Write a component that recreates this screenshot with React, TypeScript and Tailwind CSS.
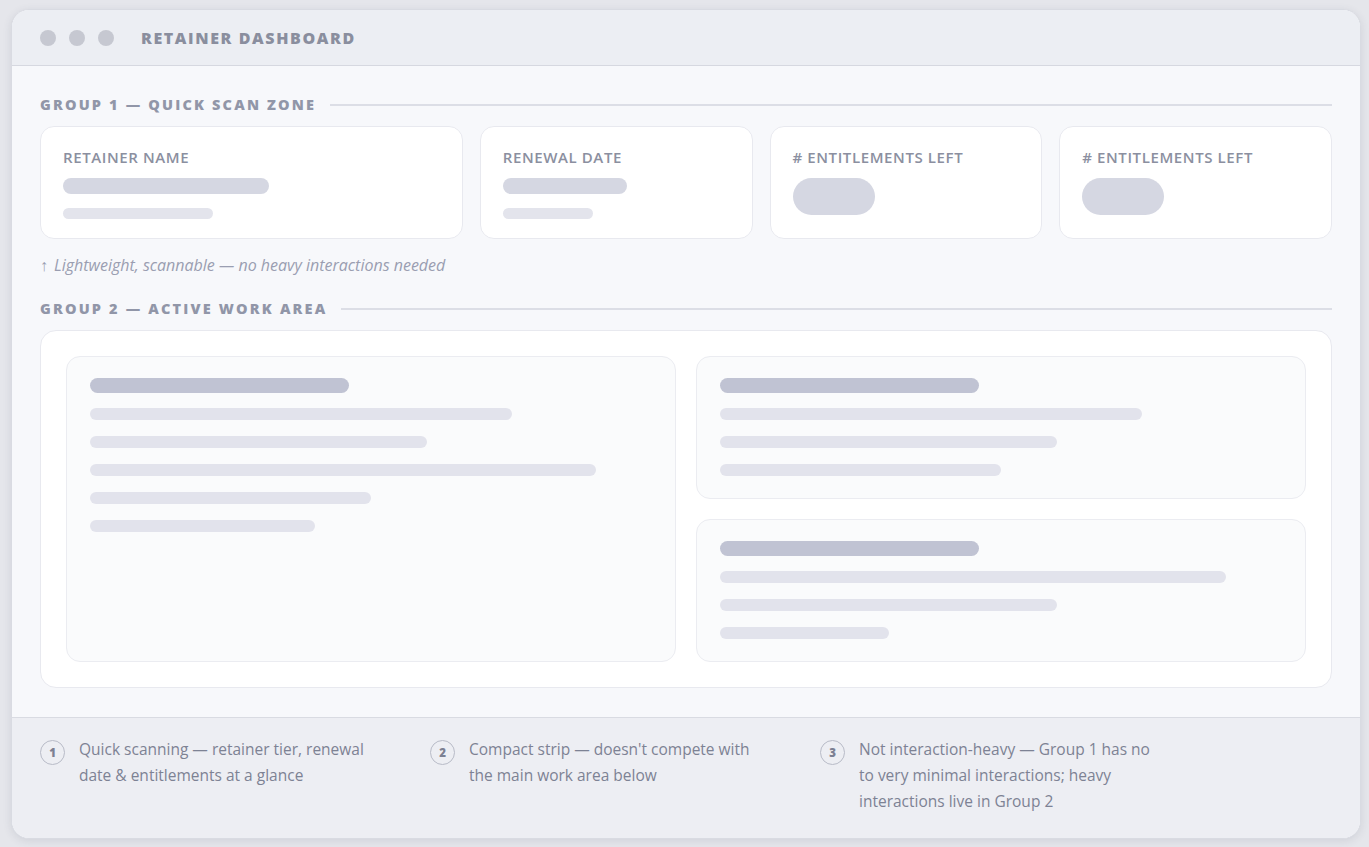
import React from "react";

const font = { fontFamily: '"Open Sans", "Noto Sans", sans-serif' };

const SectionHeading = ({ title }: { title: string }) => (
  <div className="flex items-center gap-[14px]">
    <h2 className="text-[14.5px] font-extrabold uppercase tracking-[0.15em] text-[#9196a8] whitespace-nowrap leading-none">
      {title}
    </h2>
    <div className="h-[2px] flex-1 bg-[#dcdee6]" />
  </div>
);

const ScanCard = ({
  label,
  bars,
  pill,
}: {
  label: string;
  bars?: [string, string];
  pill?: boolean;
}) => (
  <div className="h-[113px] rounded-[14px] border border-[#e8e9ef] bg-white px-[22px] pt-[20px]">
    <p className="text-[15px] font-semibold uppercase tracking-[0.04em] leading-[20px] text-[#8b8fa0]">
      {label}
    </p>
    {bars && (
      <div className="mt-[11px] flex flex-col gap-[14px]">
        <div className={`h-[16px] rounded-full bg-[#d5d7e2] ${bars[0]}`} />
        <div className={`h-[11px] rounded-full bg-[#e3e4ec] ${bars[1]}`} />
      </div>
    )}
    {pill && (
      <div className="mt-[11px] h-[37px] w-[82px] rounded-full bg-[#d5d7e2]" />
    )}
  </div>
);

const Panel = ({
  lines,
  className = "",
}: {
  lines: string[];
  className?: string;
}) => (
  <div
    className={`rounded-[14px] border border-[#ebecf1] bg-[#fafbfc] px-[23px] pt-[21px] ${className}`}
  >
    <div className="h-[15px] w-[46%] rounded-full bg-[#c0c3d3]" />
    <div className="mt-[15px] flex flex-col gap-[16px]">
      {lines.map((w, i) => (
        <div key={i} className={`h-[12px] rounded-full bg-[#e2e3ec] ${w}`} />
      ))}
    </div>
  </div>
);

const notes = [
  "Quick scanning — retainer tier, renewal date & entitlements at a glance",
  "Compact strip — doesn't compete with the main work area below",
  "Not interaction-heavy — Group 1 has no to very minimal interactions; heavy interactions live in Group 2",
];

export default function App() {
  return (
    <div
      className="min-h-screen bg-[#e5e6eb] pl-[11px] pr-[8px] pt-[9px] pb-[9px]"
      style={font}
    >
      <div className="overflow-hidden rounded-[18px] border border-[#d9dbe2] bg-[#f7f8fb] shadow-[0_2px_8px_rgba(60,64,90,0.12)]">
        {/* title bar */}
        <div className="flex h-[56px] items-center border-b border-[#d6d8e0] bg-[#eceef3] pl-[28px]">
          <div className="flex gap-[13px]">
            <span className="h-[16px] w-[16px] rounded-full bg-[#c6c8d1]" />
            <span className="h-[16px] w-[16px] rounded-full bg-[#c6c8d1]" />
            <span className="h-[16px] w-[16px] rounded-full bg-[#c6c8d1]" />
          </div>
          <h1 className="ml-[27px] text-[16px] font-extrabold uppercase tracking-[0.1em] text-[#8a8e9e]">
            Retainer Dashboard
          </h1>
        </div>

        {/* body */}
        <div className="px-[28px] pt-[32px] pb-[29px]">
          <SectionHeading title="Group 1 — Quick scan zone" />
          <div className="mt-[13px] grid grid-cols-[1.55fr_1fr_1fr_1fr] gap-[17px]">
            <ScanCard label="Retainer name" bars={["w-[206px]", "w-[150px]"]} />
            <ScanCard label="Renewal date" bars={["w-[124px]", "w-[90px]"]} />
            <ScanCard label="# Entitlements left" pill />
            <ScanCard label="# Entitlements left" pill />
          </div>
          <p className="mt-[15px] text-[16px] italic leading-[22px] text-[#9a9eb1]">
            <span className="not-italic mr-[6px]">↑</span>
            Lightweight, scannable — no heavy interactions needed
          </p>

          <div className="mt-[26px]">
            <SectionHeading title="Group 2 — Active work area" />
          </div>
          <div className="mt-[14px] grid h-[358px] grid-cols-2 gap-[20px] rounded-[16px] border border-[#e8e9ef] bg-white p-[25px]">
            <Panel
              lines={["w-[75%]", "w-[60%]", "w-[90%]", "w-[50%]", "w-[40%]"]}
            />
            <div className="flex flex-col gap-[20px]">
              <Panel className="flex-1" lines={["w-[75%]", "w-[60%]", "w-[50%]"]} />
              <Panel className="flex-1" lines={["w-[90%]", "w-[60%]", "w-[30%]"]} />
            </div>
          </div>
        </div>

        {/* footer notes */}
        <div className="flex border-t border-[#d9dbe2] bg-[#edeef3] px-[28px] pt-[24px] pb-[24px]">
          {notes.map((n, i) => (
            <div key={i} className="flex w-[390px] gap-[14px]">
              <span className="mt-[-2px] flex h-[25px] w-[25px] shrink-0 items-center justify-center rounded-full border-[1.5px] border-[#b8bbc7] text-[11.5px] font-extrabold text-[#7c8092]">
                {i + 1}
              </span>
              <p className="mt-[-6px] w-[302px] text-[15.5px] leading-[26px] text-[#7d8294]">
                {n}
              </p>
            </div>
          ))}
        </div>
      </div>
    </div>
  );
}
